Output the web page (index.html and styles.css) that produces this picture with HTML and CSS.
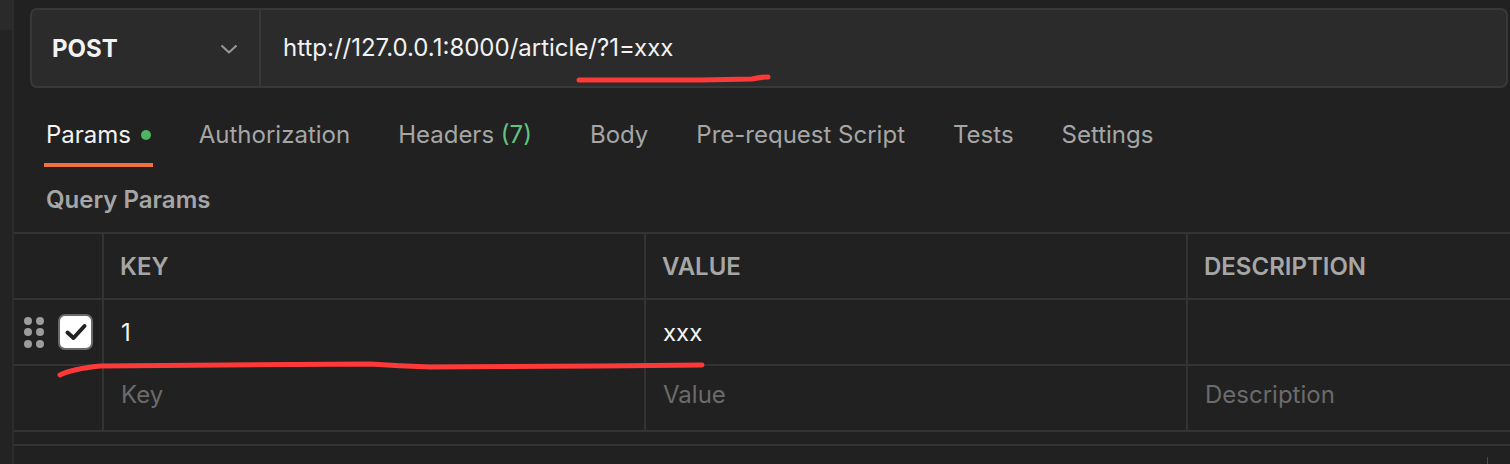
FILE: index.html
```html
<!DOCTYPE html>
<html lang="en">
<head>
<meta charset="utf-8">
<title>Request</title>
<link rel="stylesheet" href="styles.css">
</head>
<body>
<div class="app">
  <aside class="side"><div class="side-top"></div></aside>
  <main class="main">
    <div class="urlbar">
      <div class="method">
        <span class="method-name">POST</span>
        <svg class="chev" width="18" height="10" viewBox="0 0 18 10"><path d="M1.5 1.5 L9 8.5 L16.5 1.5" fill="none" stroke="#9a9a9a" stroke-width="2"/></svg>
      </div>
      <div class="url">http://127.0.0.1:8000/article/?1=xxx</div>
    </div>

    <nav class="tabs">
      <div class="tab active">Params <span class="dot"></span></div>
      <div class="tab">Authorization</div>
      <div class="tab tab-headers">Headers <span class="count">(7)</span></div>
      <div class="tab">Body</div>
      <div class="tab">Pre-request Script</div>
      <div class="tab">Tests</div>
      <div class="tab">Settings</div>
    </nav>

    <div class="section-title">Query Params</div>

    <div class="table">
      <div class="row head">
        <div class="cell first"></div>
        <div class="cell">KEY</div>
        <div class="cell">VALUE</div>
        <div class="cell">DESCRIPTION</div>
      </div>
      <div class="row">
        <div class="cell first">
          <div class="grip"><i></i><i></i><i></i><i></i><i></i><i></i></div>
          <div class="check">
            <svg width="24" height="20" viewBox="0 0 24 20"><path d="M3.5 10.5 L9.5 16 L20.5 4" fill="none" stroke="#222" stroke-width="4" stroke-linecap="round" stroke-linejoin="round"/></svg>
          </div>
        </div>
        <div class="cell val">1</div>
        <div class="cell val">xxx</div>
        <div class="cell val"></div>
      </div>
      <div class="row">
        <div class="cell first"></div>
        <div class="cell ph">Key</div>
        <div class="cell ph">Value</div>
        <div class="cell ph">Description</div>
      </div>
    </div>
    <div class="footer"><span class="tick"></span></div>
  </main>
</div>
<svg class="marks" width="1510" height="464" viewBox="0 0 1510 464">
  <path d="M579 80 L700 80 L752 79 Q760 77 768 77" fill="none" stroke="#ff3838" stroke-width="5" stroke-linecap="round"/>
  <path d="M60 375 Q72 369 100 366 L370 364 Q400 366 430 367 L600 366 L702 365" fill="none" stroke="#ff3838" stroke-width="5" stroke-linecap="round"/>
</svg>
</body>
</html>
```

FILE: styles.css
```css
* { box-sizing: border-box; }
html, body {
  margin: 0;
  background: #212121;
  width: 1510px;
  height: 464px;
  overflow: hidden;
  font-family: Inter, "Noto Sans", sans-serif;
}
.app {
  display: flex;
  height: 464px;
}
.side {
  width: 14px;
  flex: 0 0 14px;
  background: #232323;
  border-right: 2px solid #2c2c2c;
}
.side-top {
  height: 30px;
  background: #2a2a2a;
}
.main {
  flex: 1;
  min-width: 0;
  display: flex;
  flex-direction: column;
}
.urlbar {
  margin: 8px 2px 0 16px;
  height: 80px;
  display: flex;
  background: #2b2b2b;
  border: 2px solid #383838;
  border-radius: 7px;
}
.method {
  width: 229px;
  flex: 0 0 229px;
  border-right: 2px solid #383838;
  display: flex;
  align-items: center;
  justify-content: space-between;
  padding: 0 21px 0 20px;
}
.method-name {
  color: #f2f2f2;
  font-weight: 700;
  font-size: 24px;
}
.chev { display: block; margin-top: 2px; }
.url {
  display: flex;
  align-items: center;
  padding-left: 22px;
  color: #f2f2f2;
  font-size: 24px;
  padding-bottom: 2px;
}
.tabs {
  display: flex;
  gap: 44px;
  padding-left: 30px;
}
.tab {
  font-size: 24px;
  line-height: 28px;
  color: #a6a6a6;
  padding: 33px 2px 14px 2px;
  border-bottom: 4px solid transparent;
  display: flex;
  align-items: center;
  white-space: pre;
}
.tab.active {
  color: #f2f2f2;
  border-bottom-color: #f0703f;
}
.tab-headers { margin-right: 10px; }
.dot {
  display: inline-block;
  width: 10px;
  height: 10px;
  border-radius: 50%;
  background: #4fb35f;
  margin-left: 3px;
}
.count { color: #61c582; }
.section-title {
  padding-left: 32px;
  margin-top: 19px;
  font-size: 24px;
  line-height: 28px;
  font-weight: 600;
  color: #a6a6a6;
}
.table {
  margin-top: 18px;
  width: 1720px;
  border-bottom: 2px solid #333;
}
.row {
  display: grid;
  grid-template-columns: 90px 542px 542px 546px;
  height: 66px;
  border-top: 2px solid #333;
}
.cell {
  border-right: 2px solid #333;
  display: flex;
  align-items: center;
  padding-left: 17px;
  font-size: 24px;
}
.head .cell {
  padding-left: 16px;
  font-weight: 600;
  color: #a6a6a6;
}
.cell.first {
  padding-left: 10px;
  gap: 14px;
}
.val { color: #f5f5f5; }
.ph { color: #6b6b6b; padding-bottom: 8px; }
.grip {
  display: grid;
  grid-template-columns: 8px 8px;
  column-gap: 4px;
  row-gap: 3.5px;
}
.grip i {
  display: block;
  width: 8px;
  height: 8px;
  border-radius: 50%;
  background: #9c9c9c;
}
.check {
  width: 35px;
  height: 36px;
  background: #fff;
  border: 2px solid #6a6a6a;
  border-radius: 7px;
  display: flex;
  align-items: center;
  justify-content: center;
}
.check svg { display: block; }
.footer {
  margin-top: 12px;
  border-top: 2px solid #333;
  flex: 1;
  position: relative;
}
.tick {
  position: absolute;
  left: 1473px;
  top: 11px;
  width: 1px;
  height: 8px;
  background: #4a4a4a;
}
.marks {
  position: absolute;
  left: 0;
  top: 0;
  pointer-events: none;
}
```
